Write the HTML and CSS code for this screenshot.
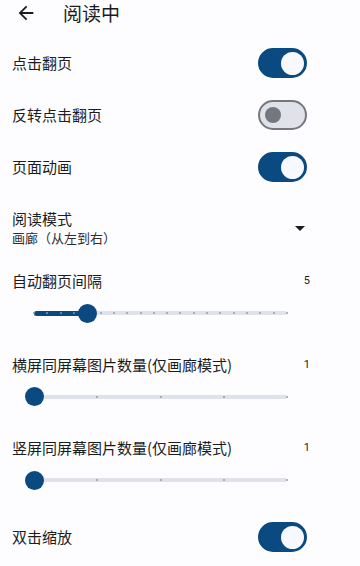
FILE: index.html
```html
<!DOCTYPE html>
<html lang="zh-CN">
<head>
  <meta charset="UTF-8" />
  <meta name="viewport" content="width=device-width, initial-scale=1.0"/>
  <title>阅读中</title>
  <link rel="stylesheet" href="styles.css">
</head>
<body>
  <div class="header">
    <svg class="back" viewBox="0 0 24 24"><path d="M20 11H7.83l5.59-5.59L12 4l-8 8 8 8 1.41-1.41L7.83 13H20v-2z"/></svg>
    <div class="title">阅读中</div>
  </div>

  <div class="list">
    <div class="row">
      <div class="label">点击翻页</div>
      <div class="switch on"><span class="knob"></span></div>
    </div>
    <div class="row">
      <div class="label">反转点击翻页</div>
      <div class="switch"><span class="knob"></span></div>
    </div>
    <div class="row">
      <div class="label">页面动画</div>
      <div class="switch on"><span class="knob"></span></div>
    </div>

    <div class="row select">
      <div class="texts">
        <div class="label">阅读模式</div>
        <div class="summary">画廊（从左到右）</div>
      </div>
      <svg class="drop" viewBox="0 0 24 24"><path d="M7 10l5 5 5-5z"/></svg>
    </div>

    <div class="pref">
      <div class="pref-head">
        <div class="label">自动翻页间隔</div>
        <div class="value">5</div>
      </div>
      <div class="slider">
        <div class="track"></div>
        <div class="track-active" style="width: 53.3px"></div>
        <div class="ticks">
          <i class="on"></i><i class="on"></i><i class="on"></i><i class="on"></i><i></i>
          <i></i><i></i><i></i><i></i><i></i>
          <i></i><i></i><i></i><i></i><i></i>
          <i></i><i></i><i></i><i></i><i></i>
        </div>
        <div class="thumb" style="left: 53.3px"></div>
      </div>
    </div>

    <div class="pref">
      <div class="pref-head">
        <div class="label">横屏同屏幕图片数量(仅画廊模式)</div>
        <div class="value">1</div>
      </div>
      <div class="slider">
        <div class="track"></div>
        <div class="ticks">
          <i></i><i></i><i></i><i></i><i></i>
        </div>
        <div class="thumb" style="left: 0px"></div>
      </div>
    </div>

    <div class="pref">
      <div class="pref-head">
        <div class="label">竖屏同屏幕图片数量(仅画廊模式)</div>
        <div class="value">1</div>
      </div>
      <div class="slider">
        <div class="track"></div>
        <div class="ticks">
          <i></i><i></i><i></i><i></i><i></i>
        </div>
        <div class="thumb" style="left: 0px"></div>
      </div>
    </div>

    <div class="row last">
      <div class="label">双击缩放</div>
      <div class="switch on"><span class="knob"></span></div>
    </div>
  </div>
</body>
</html>
```

FILE: styles.css
```css
* {
  margin: 0;
  padding: 0;
  box-sizing: border-box;
}
body {
  width: 360px;
  height: 566px;
  overflow: hidden;
  background: #fdfcff;
  color: #1a1c1e;
  font-family: "Noto Sans CJK SC", "Noto Sans", sans-serif;
}
.header {
  display: flex;
  align-items: center;
  height: 26px;
}
.back {
  width: 22px;
  height: 22px;
  margin-left: 15px;
  fill: #1a1c1e;
}
.title {
  margin-left: 26px;
  font-size: 19px;
  line-height: 26px;
}
.list {
  padding-top: 11px;
}
.row {
  display: flex;
  align-items: center;
  justify-content: space-between;
  height: 52px;
  padding: 0 53px 0 12px;
}
.row.last {
  height: 47px;
}
.label {
  font-size: 15px;
  line-height: 20px;
}
.switch {
  position: relative;
  width: 49px;
  height: 30px;
  border-radius: 15px;
  border: 2px solid #74777f;
  background: #e0e2ea;
}
.switch .knob {
  position: absolute;
  top: 50%;
  left: 5px;
  width: 16px;
  height: 16px;
  margin-top: -8px;
  border-radius: 50%;
  background: #74777f;
}
.switch.on {
  border-color: #0b4a80;
  background: #0b4a80;
}
.switch.on .knob {
  left: auto;
  right: 1px;
  width: 23px;
  height: 23px;
  margin-top: -11.5px;
  background: #f7f9ff;
}
.select {
  height: 70px;
  padding-right: 48px;
}
.summary {
  font-size: 13px;
  line-height: 18px;
  color: #2b2d31;
}
.drop {
  width: 24px;
  height: 24px;
  fill: #1a1c1e;
}
.pref {
  height: 83.5px;
  padding-top: 8px;
}
.pref-head {
  display: flex;
  align-items: center;
  justify-content: space-between;
  padding: 0 50px 0 12px;
}
.value {
  font-family: Roboto, sans-serif;
  font-size: 11px;
  line-height: 20px;
}
.slider {
  position: relative;
  width: 253px;
  height: 33px;
  margin: 5.5px 0 0 34px;
}
.track {
  position: absolute;
  top: 50%;
  left: 0;
  right: 0;
  height: 4px;
  margin-top: -2px;
  border-radius: 2px;
  background: #e0e2ea;
}
.track-active {
  position: absolute;
  top: 50%;
  left: 0;
  height: 5px;
  margin-top: -2.5px;
  border-radius: 2.5px;
  background: #0b4a80;
}
.ticks {
  position: absolute;
  top: 50%;
  left: -1px;
  right: -1px;
  height: 2px;
  margin-top: -1px;
  display: flex;
  justify-content: space-between;
}
.ticks i {
  width: 2px;
  height: 2px;
  border-radius: 1px;
  background: #9a9ca4;
}
.ticks i.on {
  background: #7f9dbe;
}
.thumb {
  position: absolute;
  top: 50%;
  width: 19px;
  height: 19px;
  margin: -9.5px 0 0 -9.5px;
  border-radius: 50%;
  background: #0b4a80;
}
```
